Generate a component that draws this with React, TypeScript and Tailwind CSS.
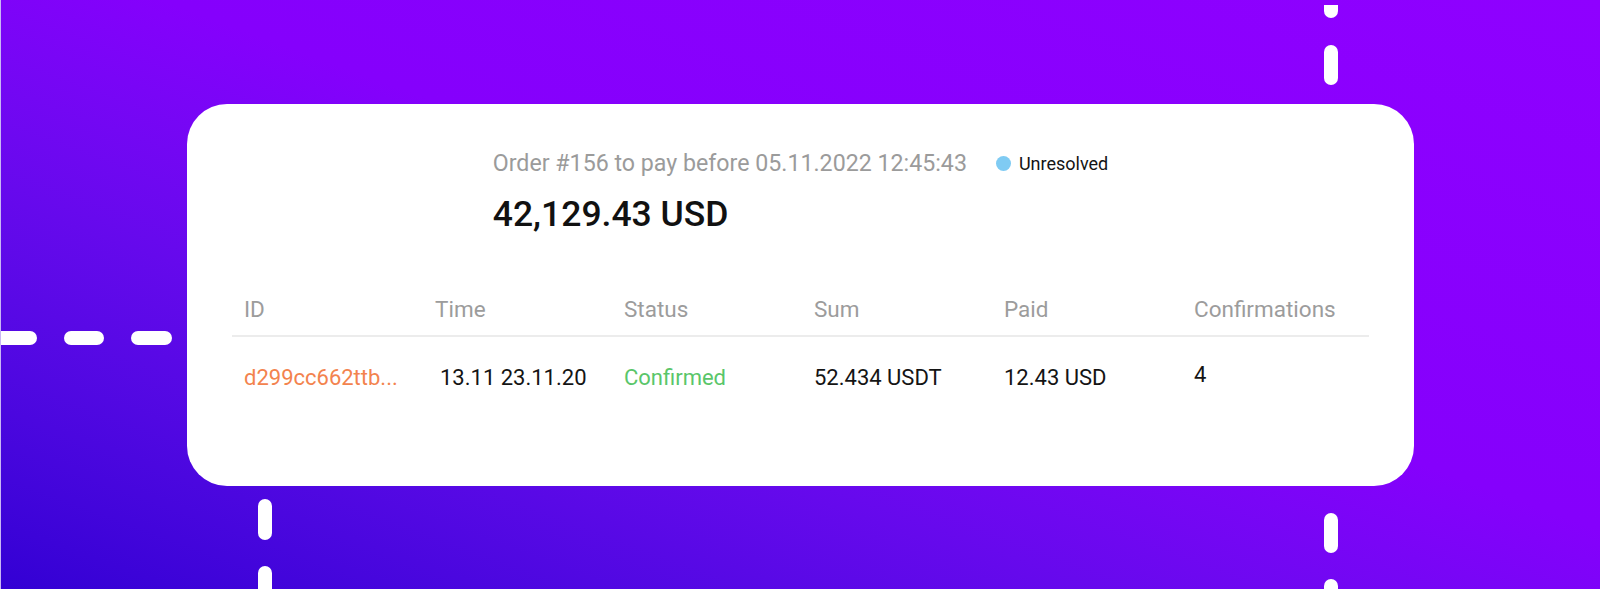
import React from "react";

function Dashes() {
  return (
    <svg
      className="absolute inset-0 pointer-events-none"
      width="1600"
      height="589"
      viewBox="0 0 1600 589"
      fill="#ffffff"
    >
      {/* left horizontal */}
      <rect x="-8" y="331" width="44" height="14" rx="7" />
      <rect x="63" y="331" width="40" height="14" rx="7" />
      <rect x="130" y="331" width="41" height="14" rx="7" />
      {/* top right vertical */}
      <path d="M1323 5 H1337 V11 A7 7 0 0 1 1323 11 Z" />
      <rect x="1323" y="45" width="14" height="40" rx="7" />
      {/* bottom left vertical */}
      <rect x="257" y="499" width="14" height="41" rx="7" />
      <rect x="257" y="566" width="14" height="40" rx="7" />
      {/* bottom right vertical */}
      <rect x="1323" y="513" width="14" height="40" rx="7" />
      <rect x="1323" y="579" width="14" height="40" rx="7" />
    </svg>
  );
}

export default function App() {
  return (
    <div className="relative w-[1600px] h-[589px] overflow-hidden bg-linear-to-tr from-[#3300d4] via-[#8500fc] via-55% to-[#8f00ff] border-l border-[#c9b6f5] font-['Roboto',sans-serif]">
      <Dashes />
      <div className="relative pt-[104px] pl-[186px]">
        <div className="w-[1227px] h-[382px] rounded-[40px] bg-white px-[45px] pt-[48px]">
          <div className="flex justify-center">
            <div>
              <div className="flex items-center">
                <span className="text-[23.2px] leading-[23px] text-[#9b9b9b]">
                  Order #156 to pay before 05.11.2022 12:45:43
                </span>
                <span className="ml-[29px] w-[15px] h-[15px] rounded-full bg-[#7fcbf3]" />
                <span className="ml-[8px] text-[18px] leading-[18px] text-[#141414]">
                  Unresolved
                </span>
              </div>
              <div className="mt-[21px] text-[35.5px] leading-[36px] font-medium text-[#111111]">
                42,129.43 USD
              </div>
            </div>
          </div>

          <div className="mt-[66px]">
            <div className="grid grid-cols-[191px_189px_190px_190px_190px_1fr] pl-[12px] text-[22.5px] leading-[23px] text-[#9c9c9c]">
              <div>ID</div>
              <div>Time</div>
              <div>Status</div>
              <div>Sum</div>
              <div>Paid</div>
              <div>Confirmations</div>
            </div>
            <div className="mt-[14px] h-[2px] bg-[#ececec]" />
            <div className="mt-[29px] grid grid-cols-[191px_189px_190px_190px_190px_1fr] pl-[12px] text-[22px] leading-[23px] text-[#141414]">
              <div className="text-[#f3834e]">d299cc662ttb...</div>
              <div className="pl-[5px]">13.11 23.11.20</div>
              <div className="text-[#5ac66a]">Confirmed</div>
              <div>52.434 USDT</div>
              <div>12.43 USD</div>
              <div className="-mt-[3px]">4</div>
            </div>
          </div>
        </div>
      </div>
    </div>
  );
}
